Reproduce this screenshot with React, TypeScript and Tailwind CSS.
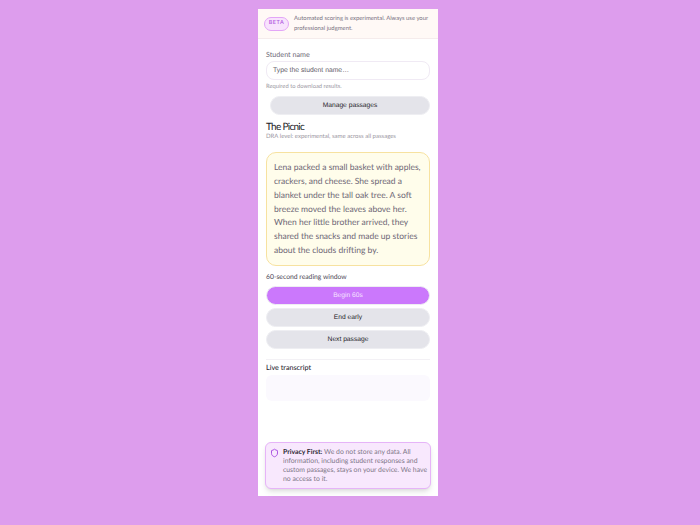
import React from "react";

const ui = "font-['Lato','Noto_Sans',sans-serif]";
const btn = "font-['Liberation_Sans',Arial,sans-serif] h-[19px] pt-[1px] rounded-full text-[6.7px] flex items-center justify-center border border-[#eeeef2]";

export default function App() {
  return (
    <div className={`w-[700px] h-[525px] bg-[#dd9ded] flex justify-center pt-[9px] pr-[4px] [text-rendering:geometricPrecision] ${ui}`}>
      <div className="w-[180px] h-[487px] bg-white flex flex-col">
        <div className="h-[30px] bg-[#fff9f6] border-b border-[#f5ecec] flex items-center pl-[6px] gap-[5px]">
          <div className="w-[25px] h-[14px] rounded-full border border-[#e3a6f7] bg-[#f8e3fd] text-[#b25be0] text-[5.5px] font-semibold tracking-[0.5px] flex items-center justify-center shrink-0">BETA</div>
          <div className="text-[5.9px] leading-[10px] text-[#77707f] whitespace-nowrap">Automated scoring is experimental. Always use your<br />professional judgment.</div>
        </div>
        <div className="px-[8px] flex flex-col flex-1">
          <div className="text-[7.2px] leading-[10px] text-[#6f6a78] mt-[11px]">Student name</div>
          <div className="h-[19px] mt-[1px] pt-[1px] rounded-[8px] border border-[#f0eaf4] flex items-center pl-[6px] text-[6.8px] text-[#5f5a68] font-['Liberation_Sans',Arial,sans-serif]">Type the student name…</div>
          <div className="text-[5.8px] leading-[8px] text-[#9a96a2] mt-[3px]">Required to download results.</div>
          <div className={`${btn} ml-[4px] mt-[5px] bg-[#e4e4ea] text-[#1c1c28]`}>Manage passages</div>
          <div className="text-[10px] leading-[12px] text-[#1c1c28] tracking-[-0.7px] mt-[6px]">The Picnic</div>
          <div className="text-[6px] leading-[8px] text-[#9a96a2]">DRA level: experimental, same across all passages</div>
          <div className="mt-[11px] h-[114px] rounded-[10px] border border-[#f7e2a0] bg-[#fffdeb] px-[7px] pt-[8px] text-[8.5px] leading-[13.85px] text-[#6d6675] whitespace-nowrap">
            Lena packed a small basket with apples,<br />
            crackers, and cheese. She spread a<br />
            blanket under the tall oak tree. A soft<br />
            breeze moved the leaves above her.<br />
            When her little brother arrived, they<br />
            shared the snacks and made up stories<br />
            about the clouds drifting by.
          </div>
          <div className="text-[6.8px] leading-[9px] text-[#4d4856] mt-[7px]">60-second reading window</div>
          <div className="flex flex-col gap-[3px] mt-[4px]">
            <div className={`${btn} bg-[#cb78fc] text-[#f6e4ff]`}>Begin 60s</div>
            <div className={`${btn} bg-[#e4e4ea] text-[#1c1c28]`}>End early</div>
            <div className={`${btn} bg-[#e4e4ea] text-[#1c1c28]`}>Next passage</div>
          </div>
          <div className="border-t border-[#f3f1f5] mt-[10px]" />
          <div className="text-[7.2px] leading-[10px] font-medium text-[#2b2733] mt-[3px]">Live transcript</div>
          <div className="h-[26px] mt-[2px] rounded-[6px] bg-[#fbf9fe]" />
        </div>
        <div className="mx-[7px] mb-[7px] h-[47px] rounded-[6px] border border-[#e6b4f8] bg-[#f8e8fd] shadow-md flex gap-[4px] pl-[4px] pr-[2px] pt-[5px]">
          <svg width="9" height="10" viewBox="0 0 24 24" fill="none" stroke="#a94fe0" strokeWidth="2.6" strokeLinecap="round" strokeLinejoin="round" className="shrink-0">
            <path d="M20 13c0 5-3.5 7.5-7.66 8.95a1 1 0 0 1-.67-.01C7.5 20.5 4 18 4 13V6a1 1 0 0 1 1-1c2 0 4.5-1.2 6.24-2.72a1.17 1.17 0 0 1 1.52 0C14.51 3.81 17 5 19 5a1 1 0 0 1 1 1z" />
          </svg>
          <div className="text-[6.85px] leading-[9.1px] text-[#7d7686] whitespace-nowrap"><b className="font-bold text-[#2b2733]">Privacy First:</b> We do not store any data. All<br />information, including student responses and<br />custom passages, stays on your device. We have<br />no access to it.</div>
        </div>
      </div>
    </div>
  );
}
